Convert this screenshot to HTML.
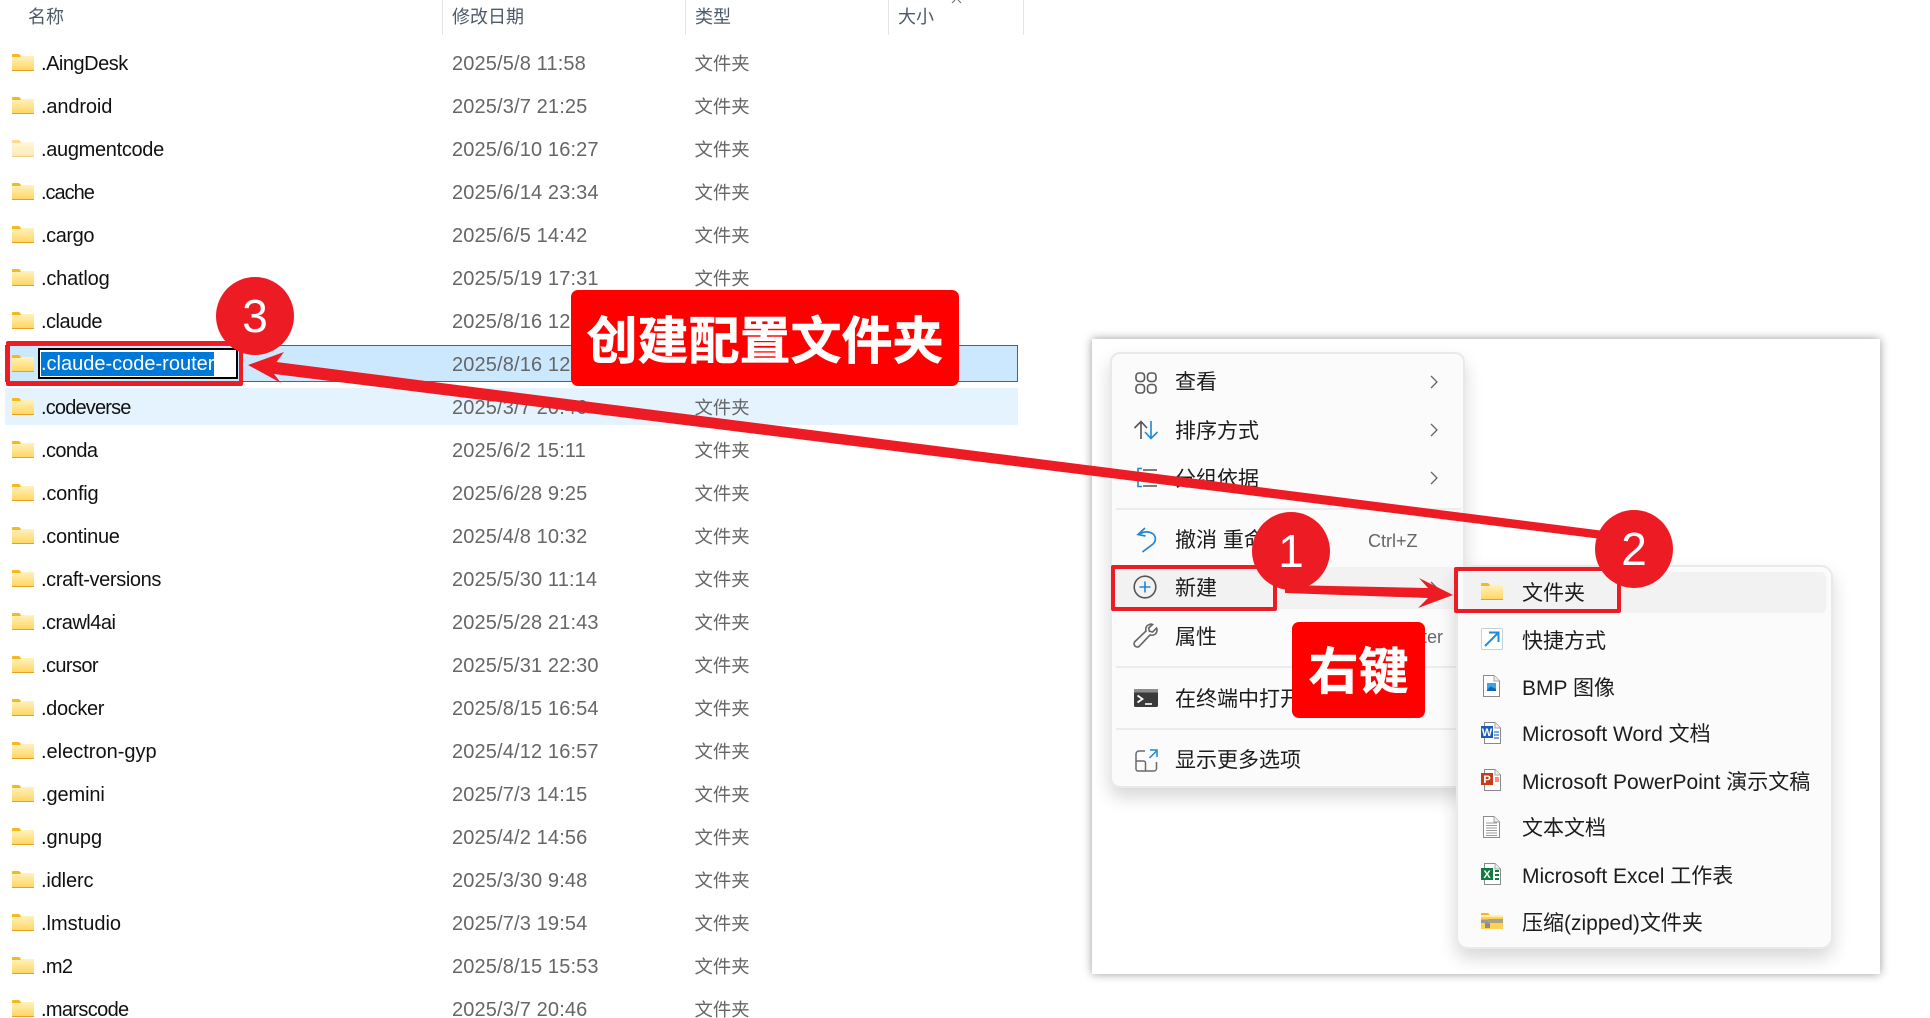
<!DOCTYPE html>
<html lang="zh-CN"><head><meta charset="utf-8"><title>创建配置文件夹</title>
<style>
html,body{margin:0;padding:0;background:#fff;width:1930px;height:1018px;overflow:hidden}
body{position:relative;font-family:"Liberation Sans","Noto Sans CJK SC",sans-serif;color:#1a1a1a}
.a{position:absolute;white-space:nowrap}
.h{top:1px;height:32px;line-height:32px;font-size:18px;color:#4c5a6a}
.s{position:absolute;top:0;height:35px;width:1px;background:#e5e5e5}
.r{position:absolute;left:0;width:1024px;height:37px;line-height:37px}
.r svg{position:absolute;left:12px;top:9px}
.r b{position:absolute;left:41px;top:1px;font-weight:400;font-size:20px;color:#111}
.r i{position:absolute;left:452px;top:1px;font-style:normal;font-size:20px;color:#666;letter-spacing:.14px}
.r u{position:absolute;left:694.500px;text-decoration:none;font-size:18.4px;color:#666}
.m{position:absolute;background:#fbfbfb;border:2px solid #e9e9e9;box-sizing:border-box;border-radius:10px;box-shadow:0 9px 18px rgba(0,0,0,.16)}
.t{position:absolute;font-size:21px;line-height:30px;height:30px;color:#1c1c1c;white-space:nowrap}
.sep{position:absolute;height:2px;background:#ececec}
.chev{position:absolute;left:1429px}
.bx{position:absolute;box-sizing:border-box;border:4.500px solid #ed1c24;border-radius:2px}
.c{position:absolute;width:78px;height:78px;border-radius:50%;background:#ed1c24;color:#fff;font-size:46px;line-height:78px;text-align:center}
.l{position:absolute;background:#f00;color:#fff;border-radius:7px;text-align:center;font-weight:700;-webkit-text-stroke:.6px #fff;white-space:nowrap}
svg{display:block;overflow:visible}
.ic{position:absolute}
</style></head><body>
<svg width="0" height="0" style="position:absolute">
<defs>
<linearGradient id="g" x1="0" y1="0" x2="0" y2="1"><stop offset="0" stop-color="#fff2bd"/><stop offset="1" stop-color="#ffd45e"/></linearGradient>
<symbol id="f" viewBox="0 0 22 17"><path d="M0 1a1 1 0 0 1 1-1h6l2 2v3H0z" fill="#f6b81c"/><path d="M0 3h8l1.500-1H22v15H0z" fill="url(#g)"/><rect y="16" width="22" height="1" fill="#e3a21f"/></symbol>
<symbol id="cv" viewBox="0 0 10 16"><path d="M2 2l6 6-6 6" fill="none" stroke="#666" stroke-width="1.300"/></symbol>
<symbol id="doc" viewBox="0 0 17 22"><path d="M.5.500H11L16.500 6v15.500H.5z" fill="#fff" stroke="#8a8a8a"/><path d="M11 .5V6h5.500" fill="#eee" stroke="#a5a5a5"/></symbol>
</defs></svg>

<div class="a h" style="left:28px">名称</div>
<div class="a h" style="left:452px">修改日期</div>
<div class="a h" style="left:695px">类型</div>
<div class="a h" style="left:898px">大小</div>
<div class="s" style="left:442px"></div><div class="s" style="left:685px"></div><div class="s" style="left:888px"></div><div class="s" style="left:1023px"></div>
<svg class="ic" style="left:951px;top:0" width="11" height="4"><path d="M1 3L4 0M10 3L7 0" fill="none" stroke="#777" stroke-width="1.200"/></svg>

<div class="a" style="left:5px;top:345px;width:1013px;height:37px;background:#cce8ff;border:1px solid #0078d4;box-sizing:border-box"></div>
<div class="a" style="left:5px;top:388px;width:1013px;height:37px;background:#e5f3ff;border-radius:2px"></div>

<div class="r" style="top:45px"><svg width="22" height="17"><use href="#f"/></svg><b style="letter-spacing:-.48px">.AingDesk</b><i>2025/5/8 11:58</i><u>文件夹</u></div>
<div class="r" style="top:88px"><svg width="22" height="17"><use href="#f"/></svg><b style="letter-spacing:-.13px">.android</b><i>2025/3/7 21:25</i><u>文件夹</u></div>
<div class="r" style="top:131px"><svg width="22" height="17" opacity=".5"><use href="#f"/></svg><b style="letter-spacing:-.32px">.augmentcode</b><i>2025/6/10 16:27</i><u>文件夹</u></div>
<div class="r" style="top:174px"><svg width="22" height="17"><use href="#f"/></svg><b style="letter-spacing:-1px">.cache</b><i>2025/6/14 23:34</i><u>文件夹</u></div>
<div class="r" style="top:217px"><svg width="22" height="17"><use href="#f"/></svg><b style="letter-spacing:-.43px">.cargo</b><i>2025/6/5 14:42</i><u>文件夹</u></div>
<div class="r" style="top:260px"><svg width="22" height="17"><use href="#f"/></svg><b style="letter-spacing:-.19px">.chatlog</b><i>2025/5/19 17:31</i><u>文件夹</u></div>
<div class="r" style="top:303px"><svg width="22" height="17"><use href="#f"/></svg><b style="letter-spacing:-.5px">.claude</b><i>2025/8/16 12:18</i><u>文件夹</u></div>
<div class="r" style="top:346px"><svg width="22" height="17"><use href="#f"/></svg><i>2025/8/16 12:18</i><u>文件夹</u></div>
<div class="r" style="top:389px"><svg width="22" height="17"><use href="#f"/></svg><b style="letter-spacing:-.83px">.codeverse</b><i>2025/3/7 20:46</i><u>文件夹</u></div>
<div class="r" style="top:432px"><svg width="22" height="17"><use href="#f"/></svg><b style="letter-spacing:-.6px">.conda</b><i>2025/6/2 15:11</i><u>文件夹</u></div>
<div class="r" style="top:475px"><svg width="22" height="17"><use href="#f"/></svg><b style="letter-spacing:-.21px">.config</b><i>2025/6/28 9:25</i><u>文件夹</u></div>
<div class="r" style="top:518px"><svg width="22" height="17"><use href="#f"/></svg><b style="letter-spacing:-.28px">.continue</b><i>2025/4/8 10:32</i><u>文件夹</u></div>
<div class="r" style="top:561px"><svg width="22" height="17"><use href="#f"/></svg><b style="letter-spacing:-.37px">.craft-versions</b><i>2025/5/30 11:14</i><u>文件夹</u></div>
<div class="r" style="top:604px"><svg width="22" height="17"><use href="#f"/></svg><b style="letter-spacing:-.5px">.crawl4ai</b><i>2025/5/28 21:43</i><u>文件夹</u></div>
<div class="r" style="top:647px"><svg width="22" height="17"><use href="#f"/></svg><b style="letter-spacing:-.59px">.cursor</b><i>2025/5/31 22:30</i><u>文件夹</u></div>
<div class="r" style="top:690px"><svg width="22" height="17"><use href="#f"/></svg><b style="letter-spacing:-.37px">.docker</b><i>2025/8/15 16:54</i><u>文件夹</u></div>
<div class="r" style="top:733px"><svg width="22" height="17"><use href="#f"/></svg><b>.electron-gyp</b><i>2025/4/12 16:57</i><u>文件夹</u></div>
<div class="r" style="top:776px"><svg width="22" height="17"><use href="#f"/></svg><b style="letter-spacing:-.1px">.gemini</b><i>2025/7/3 14:15</i><u>文件夹</u></div>
<div class="r" style="top:819px"><svg width="22" height="17"><use href="#f"/></svg><b>.gnupg</b><i>2025/4/2 14:56</i><u>文件夹</u></div>
<div class="r" style="top:862px"><svg width="22" height="17"><use href="#f"/></svg><b style="letter-spacing:-.15px">.idlerc</b><i>2025/3/30 9:48</i><u>文件夹</u></div>
<div class="r" style="top:905px"><svg width="22" height="17"><use href="#f"/></svg><b>.lmstudio</b><i>2025/7/3 19:54</i><u>文件夹</u></div>
<div class="r" style="top:948px"><svg width="22" height="17"><use href="#f"/></svg><b style="letter-spacing:-.7px">.m2</b><i>2025/8/15 15:53</i><u>文件夹</u></div>
<div class="r" style="top:991px"><svg width="22" height="17"><use href="#f"/></svg><b style="letter-spacing:-.65px">.marscode</b><i>2025/3/7 20:46</i><u>文件夹</u></div>

<div class="a" style="left:38px;top:348px;width:200px;height:31px;background:#fff;border:2px solid #000;box-sizing:border-box"></div>
<div class="a" style="left:41px;top:352px;width:173px;height:24px;line-height:25px;background:#0078d7;color:#fff;font-size:20px">.claude-code-router</div>

<!-- right panel -->
<div class="a" style="left:1092px;top:339px;width:788px;height:635px;background:#fff;box-shadow:0 0 9px rgba(0,0,0,.4)"></div>

<div class="m" style="left:1110px;top:352px;width:355px;height:436px"></div>
<div class="a" style="left:1115px;top:567px;width:345px;height:42px;background:#f2f2f2;border-radius:4px"></div>
<div class="sep" style="left:1116px;top:508px;width:345px"></div>
<div class="sep" style="left:1116px;top:666px;width:345px"></div>
<div class="sep" style="left:1116px;top:728px;width:345px"></div>

<svg class="ic" style="left:1134px;top:371px" width="24" height="24" viewBox="0 0 24 24" fill="none" stroke="#5a5a5a" stroke-width="1.600"><rect x="2" y="2" width="8.500" height="8.500" rx="3"/><rect x="13.500" y="2" width="8.500" height="8.500" rx="3"/><rect x="2" y="13.500" width="8.500" height="8.500" rx="3"/><rect x="13.500" y="13.500" width="8.500" height="8.500" rx="3"/></svg>
<div class="t" style="left:1175px;top:368px">查看</div>
<svg class="chev" style="top:374px" width="10" height="16"><use href="#cv"/></svg>

<svg class="ic" style="left:1133px;top:420px" width="26" height="20" viewBox="0 0 26 20" fill="none" stroke-width="1.600"><path d="M8 19V1.500M1.500 8L8 1.500 14 8" stroke="#555"/><path d="M18 1v17.500M12 12l6 6.500 6.500-6.500" stroke="#1f87d8"/></svg>
<div class="t" style="left:1175px;top:417px">排序方式</div>
<svg class="chev" style="top:422px" width="10" height="16"><use href="#cv"/></svg>

<svg class="ic" style="left:1135px;top:467px" width="24" height="22" viewBox="0 0 24 22" fill="none" stroke-width="1.600"><path d="M7 1.500H3v7l-1.500 2L3 12.500v7h4" stroke="#1f87d8"/><path d="M8 3h14M8 11h14M8 19h14" stroke="#555"/></svg>
<div class="t" style="left:1175px;top:465px">分组依据</div>
<svg class="chev" style="top:470px" width="10" height="16"><use href="#cv"/></svg>

<svg class="ic" style="left:1136px;top:527px" width="22" height="26" viewBox="0 0 22 26" fill="none" stroke="#1f87d8" stroke-width="1.700"><path d="M9 1L2 7.500l7.500 1.500M2.500 7.500c5-3 10-3.500 14-1 4 3 3.500 7.500.5 10.500L6.500 25"/></svg>
<div class="t" style="left:1175px;top:526px">撤消 重命名</div>
<div class="t" style="left:1368px;top:526px;font-size:18px;color:#666">Ctrl+Z</div>

<svg class="ic" style="left:1133px;top:575px" width="24" height="24" viewBox="0 0 24 24" fill="none" stroke-width="1.600"><circle cx="12" cy="12" r="10.800" stroke="#555"/><path d="M12 6.500v11M6.500 12h11" stroke="#1f87d8"/></svg>
<div class="t" style="left:1175px;top:574px">新建</div>
<svg class="chev" style="top:580px" width="10" height="16"><use href="#cv"/></svg>

<svg class="ic" style="left:1133px;top:623px" width="26" height="26" viewBox="0 0 26 26" fill="none" stroke="#666" stroke-width="1.600"><path d="M17.500 1.500c-3.500 0-5.500 3-4.500 6.500L2 18.500c-1.500 1.500-1 3.500 0 4.500 1.200 1.200 3 1.500 4.500 0L17 12c3.500 1 7-1 7-5 0-.8-.2-1.500-.4-2l-4 4-3.200-.8-.8-3.200 4-3.500c-.5-.2-1.300-.5-2.100-.5z"/></svg>
<div class="t" style="left:1175px;top:623px">属性</div>
<div class="t" style="left:1352px;width:91px;text-align:right;top:622px;font-size:18px;color:#666">Alt+Enter</div>

<svg class="ic" style="left:1134px;top:689px" width="24" height="18" viewBox="0 0 24 18"><rect width="24" height="18" rx="1.500" fill="#3a3a3a"/><rect width="24" height="3.500" fill="#8c8c8c"/><path d="M3.500 6.500l5 3.500-5 3.500" fill="none" stroke="#fff" stroke-width="1.800"/><path d="M11 15h7" stroke="#fff" stroke-width="1.600"/></svg>
<div class="t" style="left:1175px;top:685px">在终端中打开</div>

<svg class="ic" style="left:1135px;top:749px" width="23" height="23" viewBox="0 0 23 23" fill="none" stroke-width="1.500"><path d="M10 2H4a3 3 0 0 0-3 3v15a2 2 0 0 0 2 2h16a2.500 2.500 0 0 0 2.500-2.500V13M1 12h7.500a2 2 0 0 1 2 2v8" stroke="#6a6a6a"/><path d="M14.500 9L22 1.500M15 1h7v7" stroke="#1f87d8"/></svg>
<div class="t" style="left:1175px;top:746px">显示更多选项</div>

<!-- submenu -->
<div class="m" style="left:1456px;top:565px;width:377px;height:384px;border-radius:12px"></div>
<div class="a" style="left:1463px;top:572px;width:363px;height:41px;background:#f2f2f2;border-radius:5px"></div>

<svg class="ic" style="left:1481px;top:583px" width="22" height="17"><use href="#f"/></svg>
<div class="t" style="left:1522px;top:579px">文件夹</div>

<svg class="ic" style="left:1481px;top:628px" width="22" height="22" viewBox="0 0 22 22" fill="none"><rect x=".5" y=".5" width="21" height="21" rx="1" fill="#fff" stroke="#c4d2de"/><path d="M4 18L17 5M8 4.500h9.500V14" stroke="#1b8ce0" stroke-width="2"/></svg>
<div class="t" style="left:1522px;top:627px">快捷方式</div>

<svg class="ic" style="left:1483px;top:675px" width="17" height="22"><use href="#doc"/><rect x="4" y="8" width="9" height="8" fill="#3aa5ee"/><path d="M4 15l3.500-3.500 5.500 2.500v2H4z" fill="#1264b8"/></svg>
<div class="t" style="left:1522px;top:674px">BMP 图像</div>

<svg class="ic" style="left:1481px;top:722px" width="22" height="22"><g transform="translate(3,0)"><use href="#doc" width="17" height="22"/></g><path d="M13 10h5M13 13h5M13 16h5" stroke="#2b6fc8" stroke-width="1.200"/><rect y="4" width="12" height="12" fill="#1e5cba"/><text x="6" y="14" font-size="11" font-weight="700" fill="#fff" text-anchor="middle">W</text></svg>
<div class="t" style="left:1522px;top:720px">Microsoft Word 文档</div>

<svg class="ic" style="left:1481px;top:769px" width="22" height="22"><g transform="translate(3,0)"><use href="#doc" width="17" height="22"/></g><path d="M14 8h4v5h-4z" fill="#f3917a"/><rect y="4" width="12" height="12" fill="#c43e1c"/><text x="6" y="14" font-size="11" font-weight="700" fill="#fff" text-anchor="middle">P</text></svg>
<div class="t" style="left:1522px;top:768px">Microsoft PowerPoint 演示文稿</div>

<svg class="ic" style="left:1483px;top:816px" width="17" height="22"><use href="#doc"/><path d="M3 7h11M3 9.500h11M3 12h11M3 14.500h11M3 17h11M3 19.500h11" stroke="#999" stroke-width="1"/></svg>
<div class="t" style="left:1522px;top:814px">文本文档</div>

<svg class="ic" style="left:1481px;top:863px" width="22" height="22"><g transform="translate(3,0)"><use href="#doc" width="17" height="22"/></g><path d="M14 7h4v2h-4zM14 11h4v2h-4zM14 15h4v2h-4z" fill="#107c41"/><rect y="5" width="12" height="12" fill="#107c41"/><text x="6" y="15" font-size="11" font-weight="700" fill="#fff" text-anchor="middle">X</text></svg>
<div class="t" style="left:1522px;top:862px">Microsoft Excel 工作表</div>

<svg class="ic" style="left:1481px;top:912px" width="22" height="17" viewBox="0 0 22 17"><path d="M0 1h7l2 2H0z" fill="#f6b81c"/><rect y="3" width="22" height="14" fill="#fdd251"/><rect y="3" width="22" height="2" fill="#fff0b0"/><rect x="7" y="7" width="15" height="4" fill="#a9a28a"/><rect y="7.500" width="7" height="3.500" fill="#9a9a9a"/><rect x="4" y="11" width="5" height="5" fill="#8c8c8c"/></svg>
<div class="t" style="left:1522px;top:909px">压缩(zipped)文件夹</div>

<!-- annotations -->
<div class="bx" style="left:6px;top:341px;width:237px;height:45px"></div>
<div class="bx" style="left:1111px;top:565px;width:166px;height:46px"></div>
<div class="bx" style="left:1454px;top:567px;width:167px;height:46px"></div>

<svg class="ic" style="left:0;top:0" width="1930" height="1018">
<polygon fill="#ed1c24" points="248,365 284,352 276.500,362 1620,533 1618,541 274,374 281,383"/>
<polygon fill="#ed1c24" points="1285,585 1428,588 1419,578 1453,595 1418,608 1428,598 1285,593"/>
</svg>

<div class="c" style="left:216px;top:277px">3</div>
<div class="c" style="left:1252px;top:512px">1</div>
<div class="c" style="left:1595px;top:510px">2</div>

<div class="l" style="left:571px;top:290px;width:388px;height:96px;line-height:103px;font-size:51px">创建配置文件夹</div>
<div class="l" style="left:1292px;top:622px;width:133px;height:96px;line-height:101px;font-size:50px">右键</div>
</body></html>
